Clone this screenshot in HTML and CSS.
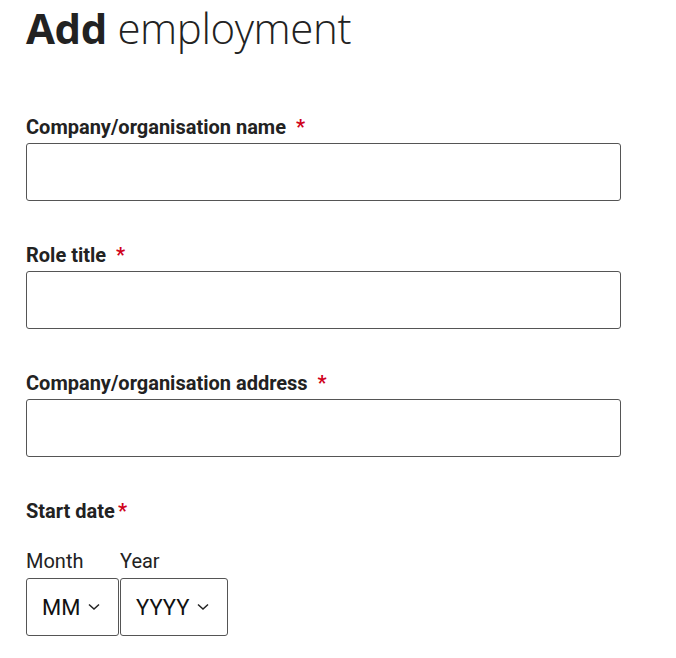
FILE: index.html
```html
<!DOCTYPE html>
<html lang="en">
<head>
  <meta charset="UTF-8" />
  <title>Add employment</title>
  <link rel="stylesheet" href="styles.css">
</head>
<body>
  <div class="page">
    <h1 class="title"><b>Add</b> employment</h1>

    <form class="form">
      <div class="field">
        <label for="company">Company/organisation name <span class="req">*</span></label>
        <input type="text" id="company" />
      </div>

      <div class="field">
        <label for="role">Role title <span class="req">*</span></label>
        <input type="text" id="role" />
      </div>

      <div class="field">
        <label for="address">Company/organisation address <span class="req">*</span></label>
        <input type="text" id="address" />
      </div>

      <div class="field">
        <div class="legend">Start date<span class="req tight">*</span></div>
        <div class="date-row">
          <div class="date-part">
            <span class="sub-label">Month</span>
            <div class="select month">MM <span class="chev"><svg width="12" height="8" viewBox="0 0 12 8"><path d="M1 1.5l5 4.5 5-4.5" fill="none" stroke="#222" stroke-width="1.5"/></svg></span></div>
          </div>
          <div class="date-part">
            <span class="sub-label">Year</span>
            <div class="select year">YYYY <span class="chev"><svg width="12" height="8" viewBox="0 0 12 8"><path d="M1 1.5l5 4.5 5-4.5" fill="none" stroke="#222" stroke-width="1.5"/></svg></span></div>
          </div>
        </div>
      </div>
    </form>
  </div>
</body>
</html>
```

FILE: styles.css
```css
body {
  margin: 0;
  padding: 0;
  background: #fff;
  color: #222;
  font-family: Roboto, "Liberation Sans", sans-serif;
}

.page {
  padding: 0 26px;
}

.title {
  margin: 0;
  font-family: "Open Sans", sans-serif;
  font-size: 42px;
  font-weight: 300;
  line-height: 56px;
  color: #222;
  letter-spacing: -0.4px;
}

.title b {
  font-weight: 700;
}

.form {
  margin-top: 59px;
  width: 595px;
}

.field {
  margin-bottom: 42px;
}

.field label,
.legend {
  display: block;
  font-size: 20px;
  font-weight: 700;
  line-height: 24px;
  margin-bottom: 4px;
  color: #222;
}

.req {
  color: #d0021b;
  margin-left: 5px;
}

.req.tight {
  margin-left: 3px;
}

.field input {
  display: block;
  box-sizing: border-box;
  width: 100%;
  height: 58px;
  border: 1.5px solid #555;
  border-radius: 3px;
  margin: 0;
}

.date-row {
  display: flex;
  gap: 1px;
  margin-top: 26px;
}

.date-part {
  display: flex;
  flex-direction: column;
}

.sub-label {
  font-size: 20px;
  line-height: 24px;
  margin-bottom: 5px;
  color: #222;
}

.select {
  box-sizing: border-box;
  height: 58px;
  border: 1.5px solid #555;
  border-radius: 3px;
  display: flex;
  align-items: center;
  font-size: 22px;
  color: #111;
}

.month {
  width: 93px;
  padding-left: 15px;
}

.year {
  width: 108px;
  padding-left: 15px;
}

.chev {
  margin-left: 8px;
  display: flex;
  align-items: center;
}
```
